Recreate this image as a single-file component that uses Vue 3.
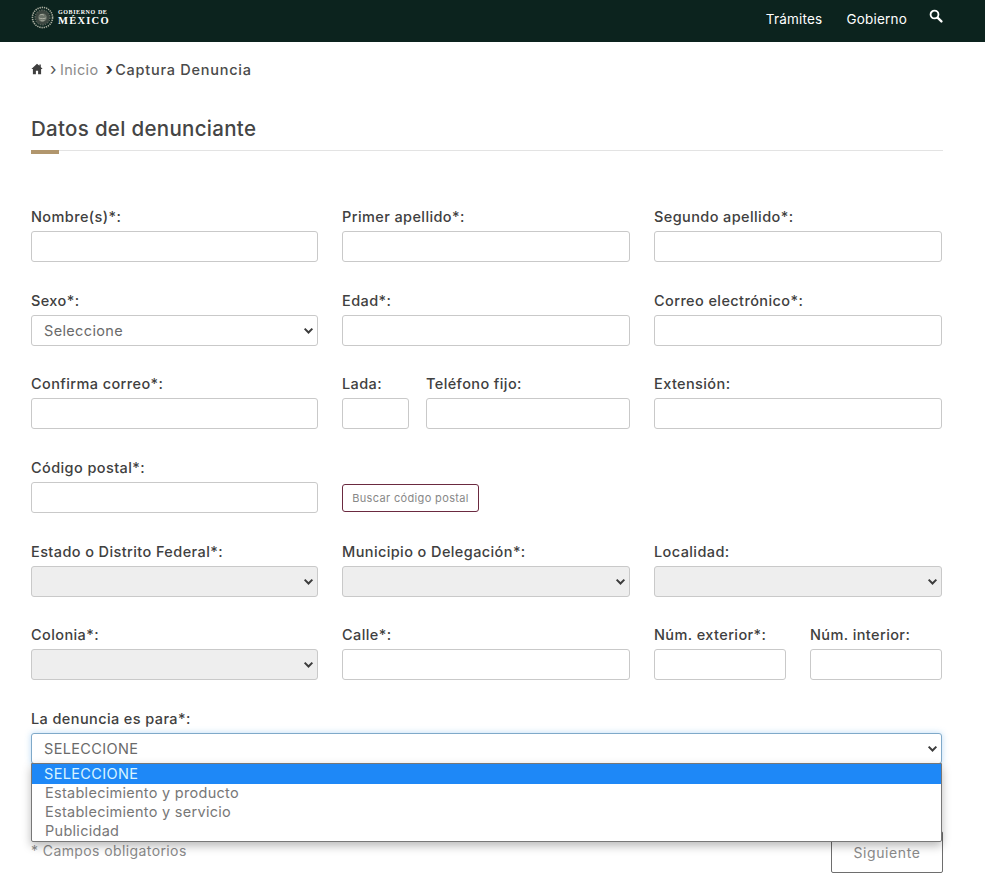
<script setup>
const options = ['SELECCIONE', 'Establecimiento y producto', 'Establecimiento y servicio', 'Publicidad']
const chevron = 'M1.500 1.500 5 5l3.500-3.500'
</script>

<template>
  <div class="page">
    <header class="topbar">
      <div class="brand">
        <svg class="emblem" viewBox="0 0 24 24" aria-hidden="true">
          <circle cx="12" cy="12" r="7.500" fill="#3d4741" />
          <circle cx="12" cy="12" r="10.500" fill="none" stroke="#a9ad9f" stroke-width="1.700" stroke-dasharray="1.400 .9" />
          <circle cx="12" cy="12" r="7.800" fill="none" stroke="#7d8479" stroke-width="1" stroke-dasharray="1.600 1.100" />
          <path d="M8 10c2-2.600 5.500-3 7.500-1 1.600 1.700 1.300 4.600-.6 6.300-2 1.700-4.900 1.500-6.400-.3-1-1.300-1.300-3.300-.5-5Z" fill="#6a7268" />
          <path d="M9 9.500c1.500-.8 3-.8 4.500 0M8.500 12.500c2 1 4.500 1 7 0M10 15c1 .6 3 .6 4 0" fill="none" stroke="#c3c6b8" stroke-width=".8" />
        </svg>
        <div class="wordmark">
          <span class="wm-small">GOBIERNO DE</span>
          <span class="wm-large">MÉXICO</span>
        </div>
      </div>
      <nav class="nav">
        <a>Trámites</a>
        <a>Gobierno</a>
        <svg class="search" viewBox="0 0 16 16" aria-hidden="true">
          <circle cx="6.300" cy="6.300" r="4.500" fill="none" stroke="#fff" stroke-width="2.100" />
          <path d="m9.800 9.800 4.400 4.400" stroke="#fff" stroke-width="2.600" stroke-linecap="round" />
        </svg>
      </nav>
    </header>

    <main class="content">
      <div class="crumbs">
        <svg class="home" viewBox="0 0 12 12" aria-hidden="true">
          <path d="M6 .8 .4 6h1.500v5.200h3V7.800h2.200v3.400h3V6h1.500L9.800 4.100V1.500H8.400v1.300Z" fill="#3f3f3f" />
        </svg>
        <span class="sep first">›</span>
        <span class="crumb-link">Inicio</span>
        <span class="sep strong">›</span>
        <span class="crumb-current">Captura Denuncia</span>
      </div>

      <h1 class="title">Datos del denunciante</h1>
      <div class="rule"><span></span></div>

      <form class="form" @submit.prevent>
        <div class="row">
          <div class="field"><label>Nombre(s)*:</label><div class="input"></div></div>
          <div class="field"><label>Primer apellido*:</label><div class="input"></div></div>
          <div class="field"><label>Segundo apellido*:</label><div class="input"></div></div>
        </div>

        <div class="row">
          <div class="field">
            <label>Sexo*:</label>
            <div class="input select"><span>Seleccione</span>
              <svg class="chev" viewBox="0 0 10 6.500"><path :d="chevron" /></svg>
            </div>
          </div>
          <div class="field"><label>Edad*:</label><div class="input"></div></div>
          <div class="field"><label>Correo electrónico*:</label><div class="input"></div></div>
        </div>

        <div class="row">
          <div class="field"><label>Confirma correo*:</label><div class="input"></div></div>
          <div class="split phone">
            <div class="field"><label>Lada:</label><div class="input"></div></div>
            <div class="field"><label>Teléfono fijo:</label><div class="input"></div></div>
          </div>
          <div class="field"><label>Extensión:</label><div class="input"></div></div>
        </div>

        <div class="row">
          <div class="field"><label>Código postal*:</label><div class="input"></div></div>
          <div class="field btn-cell"><button type="button" class="btn-cp">Buscar código postal</button></div>
        </div>

        <div class="row">
          <div class="field">
            <label>Estado o Distrito Federal*:</label>
            <div class="input select off"><svg class="chev" viewBox="0 0 10 6.500"><path :d="chevron" /></svg></div>
          </div>
          <div class="field">
            <label>Municipio o Delegación*:</label>
            <div class="input select off"><svg class="chev" viewBox="0 0 10 6.500"><path :d="chevron" /></svg></div>
          </div>
          <div class="field">
            <label>Localidad:</label>
            <div class="input select off"><svg class="chev" viewBox="0 0 10 6.500"><path :d="chevron" /></svg></div>
          </div>
        </div>

        <div class="row">
          <div class="field">
            <label>Colonia*:</label>
            <div class="input select off"><svg class="chev" viewBox="0 0 10 6.500"><path :d="chevron" /></svg></div>
          </div>
          <div class="field"><label>Calle*:</label><div class="input"></div></div>
          <div class="split nums">
            <div class="field"><label>Núm. exterior*:</label><div class="input"></div></div>
            <div class="field"><label>Núm. interior:</label><div class="input"></div></div>
          </div>
        </div>

        <div class="field wide">
          <label>La denuncia es para*:</label>
          <div class="input select focus"><span>SELECCIONE</span>
            <svg class="chev" viewBox="0 0 10 6.500"><path :d="chevron" /></svg>
          </div>
          <ul class="menu">
            <li v-for="(o, i) in options" :key="o" :class="{ active: i === 0 }">{{ o }}</li>
          </ul>
        </div>

        <div class="footer">
          <span class="note">* Campos obligatorios</span>
          <button type="button" class="btn-next">Siguiente</button>
        </div>
      </form>
    </main>
  </div>
</template>

<style scoped>
.page {
  width: 985px;
  height: 873px;
  overflow: hidden;
  background: #fff;
  font-family: Inter, "Open Sans", "Liberation Sans", sans-serif;
  color: #404040;
}
.topbar {
  height: 42px;
  background: #0c231e;
  display: flex;
  justify-content: space-between;
  padding: 0 42px 0 31px;
  box-sizing: border-box;
}
.brand {
  display: flex;
  align-items: center;
  gap: 4px;
  height: 35px;
}
.emblem { width: 23px; height: 23px; }
.wordmark {
  display: flex;
  flex-direction: column;
  color: #fff;
  font-family: "Liberation Serif", serif;
  line-height: 1;
}
.wm-small { font-size: 6px; font-weight: 700; letter-spacing: .6px; }
.wm-large { font-size: 10.500px; font-weight: 700; letter-spacing: 1.250px; margin-top: 1px; }
.nav {
  display: flex;
  align-items: flex-start;
  color: #fff;
  font-size: 13.500px;
  line-height: 38px;
  letter-spacing: .2px;
}
.nav a { margin-right: 24px; }
.search { width: 14px; height: 14px; margin-top: 9px; margin-left: -2px; }

.content { padding: 0 42px 0 31px; }
.crumbs {
  display: flex;
  align-items: center;
  height: 20px;
  margin-top: 17px;
  font-size: 14.500px;
  letter-spacing: .35px;
}
.home { width: 12px; height: 12px; }
.sep { margin: 0 5px 0 7px; color: #555; font-size: 17px; line-height: 20px; }
.sep.first { margin-right: 3px; }
.sep.strong { margin-left: 7px; margin-right: 2px; font-weight: 700; color: #333; }
.crumb-link { color: #8a8a8a; }
.crumb-current { font-weight: 500; color: #4a4a4a; letter-spacing: .75px; }
.title {
  margin: 36px 0 0;
  font-size: 20.500px;
  line-height: 28px;
  font-weight: 500;
  color: #454545;
  letter-spacing: .3px;
}
.rule {
  margin-top: 7px;
  height: 1px;
  background: #e3e3e3;
  position: relative;
  width: 912px;
}
.rule span {
  position: absolute;
  left: 0;
  top: 0;
  width: 28px;
  height: 4px;
  background: #b1966d;
}
.form {
  margin-top: 56px;
  width: 911px;
  display: flex;
  flex-direction: column;
  gap: 28.700px;
}
.row {
  display: grid;
  grid-template-columns: 287px 288px 288px;
  column-gap: 24px;
}
.split { display: grid; }
.phone { grid-template-columns: 67px 1fr; column-gap: 17px; }
.nums { grid-template-columns: 132px 132px; column-gap: 24px; }
.field { display: flex; flex-direction: column; min-width: 0; position: relative; }
label {
  font-size: 14.500px;
  font-weight: 500;
  line-height: 20px;
  height: 20px;
  margin-bottom: 4px;
  color: #404040;
  white-space: nowrap;
  letter-spacing: .4px;
}
.input {
  height: 31px;
  box-sizing: border-box;
  border: 1px solid #c9c9c9;
  border-radius: 3px;
  background: #fff;
  display: flex;
  align-items: center;
  padding: 0 3px 0 12px;
  font-size: 14.500px;
  letter-spacing: .35px;
  color: #6a6a6a;
}
.select { justify-content: space-between; }
.select.off { background: #eeeeee; justify-content: flex-end; }
.select.focus {
  border-color: #7fa9c9;
  box-shadow: 0 0 6px rgba(102, 175, 233, .45);
}
.chev {
  width: 11px;
  height: 7.200px;
  flex: none;
  fill: none;
  stroke: #3c3c3c;
  stroke-width: 1.800;
  margin-left: auto;
}
.btn-cell { padding-top: 26px; }
.btn-cp {
  align-self: flex-start;
  width: 137px;
  height: 28px;
  padding: 0;
  background: #fff;
  border: 1px solid #6b2a40;
  border-radius: 3px;
  font: 400 11px Inter, "Open Sans", sans-serif;
  letter-spacing: .35px;
  color: #888;
}
.wide { z-index: 2; }
.menu {
  position: absolute;
  left: 0;
  right: 0;
  top: 54px;
  margin: 0;
  padding: 0;
  list-style: none;
  background: #fff;
  border: 1px solid #777;
  border-radius: 0 0 2px 2px;
  box-shadow: 0 4px 10px rgba(0, 0, 0, .28);
  font-size: 14.500px;
  letter-spacing: .28px;
  line-height: 18px;
  color: #777;
}
.menu li { padding-left: 13px; height: 19px; }
.menu li.active { background: #1e88f7; color: #d8f4ff; height: 20px; line-height: 20px; padding-left: 12px; letter-spacing: .35px; }
.footer {
  margin-top: 38.300px;
  display: flex;
  justify-content: space-between;
  align-items: flex-start;
}
.note { font-size: 14px; color: #8a8a8a; margin-top: 10px; line-height: 20px; letter-spacing: .4px; }
.btn-next {
  width: 112px;
  height: 42px;
  background: #fff;
  border: 1px solid #6e6e6e;
  border-radius: 2px;
  font: 400 14px Inter, "Open Sans", sans-serif;
  letter-spacing: .6px;
  color: #8a8a8a;
  position: relative;
  left: 1px;
}
</style>
